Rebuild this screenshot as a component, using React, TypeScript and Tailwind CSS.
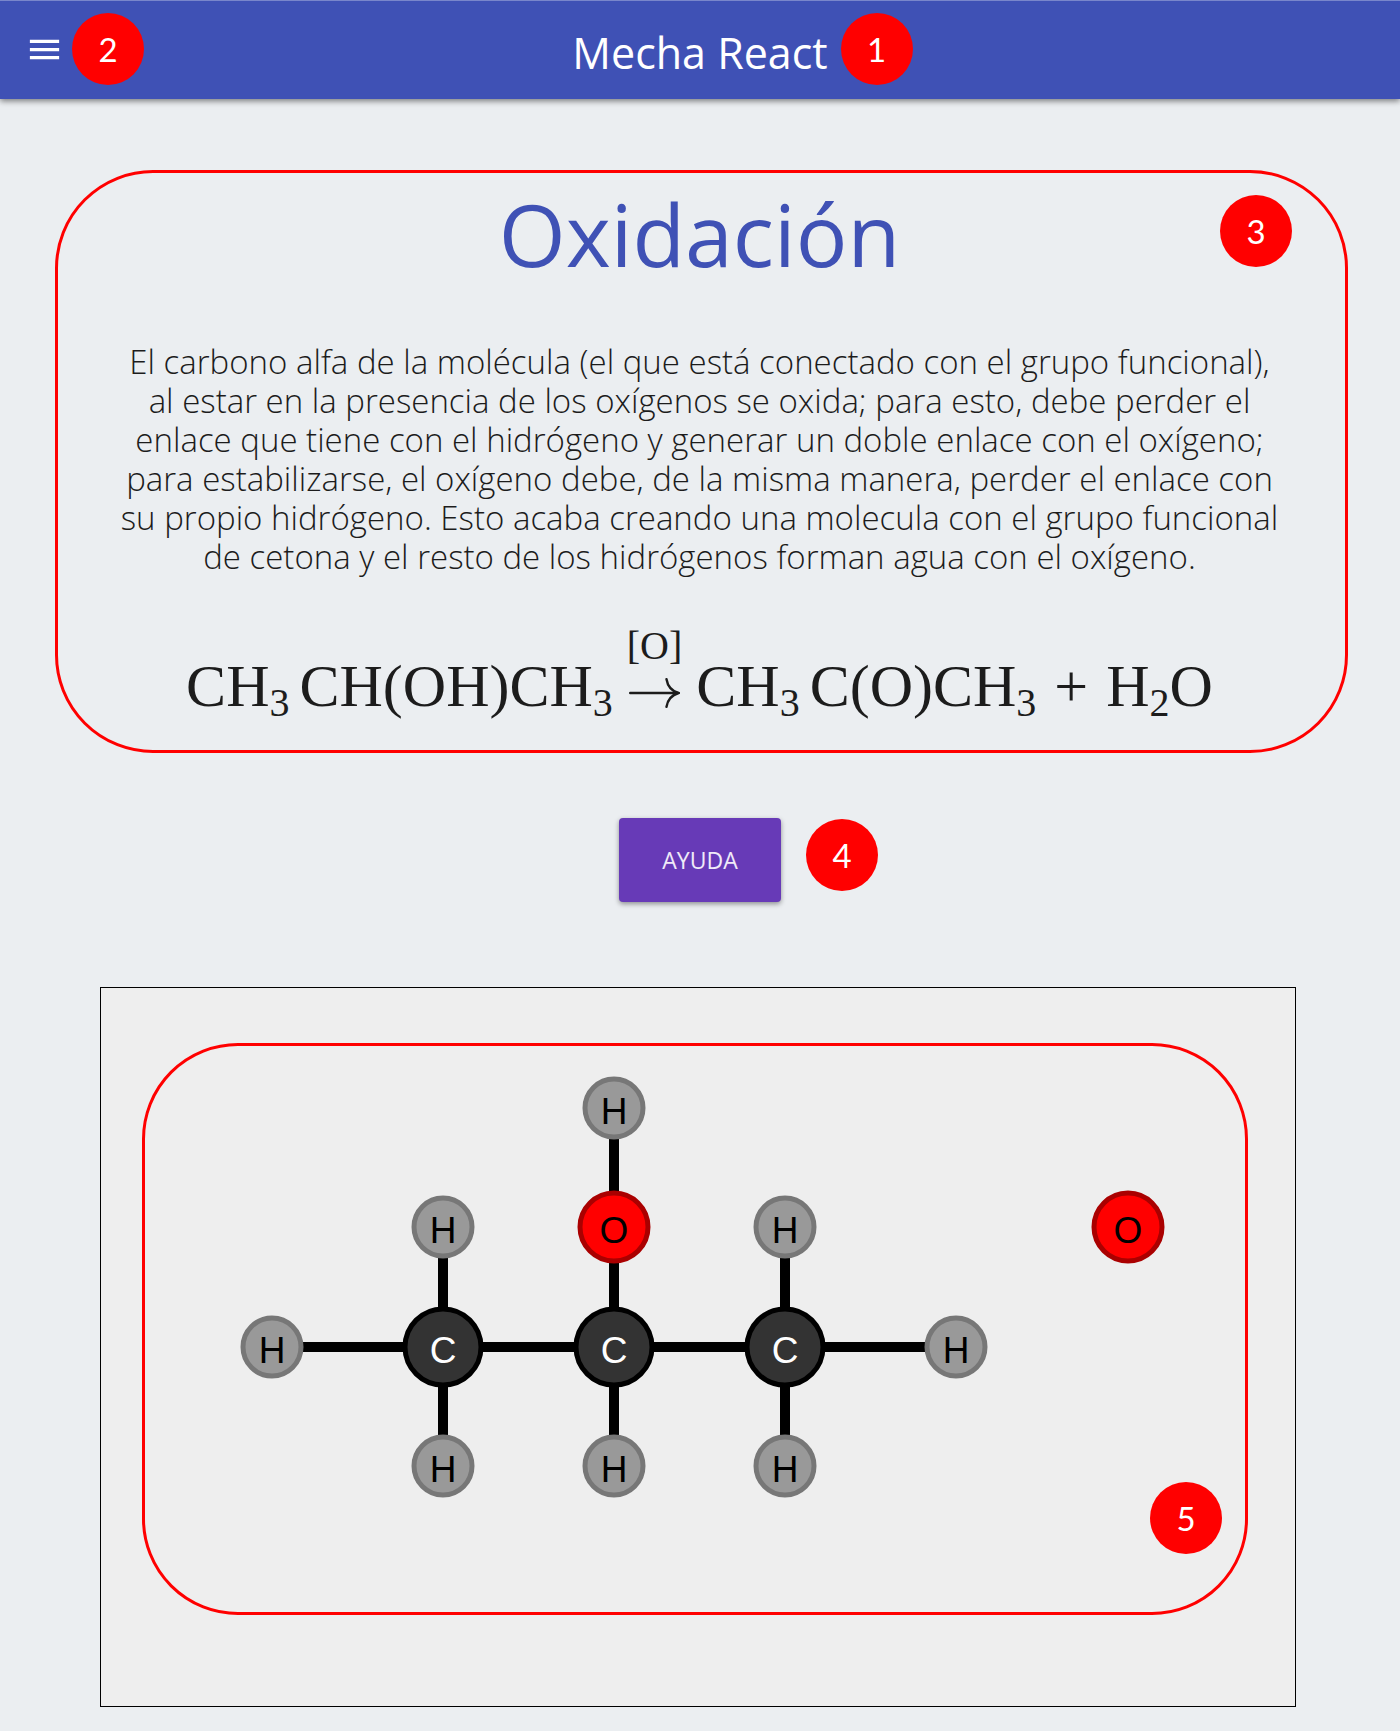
import React from "react";

type Element = "H" | "O" | "C";

const ATOM_STYLE: Record<Element, { r: number; fill: string; stroke: string; text: string }> = {
  H: { r: 29, fill: "#999999", stroke: "#777777", text: "#000000" },
  O: { r: 34, fill: "#ff0000", stroke: "#aa0000", text: "#000000" },
  C: { r: 38, fill: "#333333", stroke: "#000000", text: "#ffffff" },
};

const ATOMS: { el: Element; x: number; y: number }[] = [
  { el: "H", x: 469, y: 62 },
  { el: "H", x: 298, y: 181 },
  { el: "O", x: 469, y: 181 },
  { el: "H", x: 640, y: 181 },
  { el: "O", x: 983, y: 181 },
  { el: "H", x: 127, y: 301 },
  { el: "C", x: 298, y: 301 },
  { el: "C", x: 469, y: 301 },
  { el: "C", x: 640, y: 301 },
  { el: "H", x: 811, y: 301 },
  { el: "H", x: 298, y: 420 },
  { el: "H", x: 469, y: 420 },
  { el: "H", x: 640, y: 420 },
];

const BONDS: [number, number, number, number][] = [
  [127, 301, 811, 301],
  [298, 181, 298, 420],
  [469, 62, 469, 420],
  [640, 181, 640, 420],
];

function Badge({ n, className = "" }: { n: number; className?: string }) {
  return (
    <span
      className={`flex size-[72px] shrink-0 items-center justify-center rounded-full bg-[#ff0000] pt-0.5 font-['Lato',sans-serif] text-[33px] text-white ${className}`}
    >
      {n}
    </span>
  );
}

function Sub({ children }: { children: React.ReactNode }) {
  return <sub className="text-[40px]">{children}</sub>;
}

function Equation() {
  return (
    <div className="flex items-end justify-center whitespace-nowrap font-['Liberation_Serif',serif] text-[60px] leading-[60px] text-[#1c1c1c]">
      <span>
        CH<Sub>3</Sub>
      </span>
      <span className="ml-[10px]">
        CH(OH)CH<Sub>3</Sub>
      </span>
      <span className="mx-[14px] flex flex-col items-center gap-3 pb-2">
        <span className="text-[40px] leading-[40px]">[O]</span>
        <svg
          className="h-[30px] w-[51px]"
          viewBox="0 0 51 30"
          fill="none"
          stroke="currentColor"
          strokeWidth="2.4"
          strokeLinecap="round"
          role="img"
          aria-label="produce"
        >
          <path d="M1.2 15H49" />
          <path d="M37.5 1.2C38.6 8 43 13 49.4 15C43 17 38.6 22 37.5 28.8" />
        </svg>
      </span>
      <span>
        CH<Sub>3</Sub>
      </span>
      <span className="ml-[10px]">
        C(O)CH<Sub>3</Sub>
      </span>
      <span className="mx-[18px]">+</span>
      <span>
        H<Sub>2</Sub>O
      </span>
    </div>
  );
}

function Molecule() {
  return (
    <svg className="block w-full" viewBox="0 0 1100 566" role="img" aria-label="Molécula de isopropanol con un oxígeno libre">
      {BONDS.map(([x1, y1, x2, y2]) => (
        <line key={`${x1}-${y1}`} x1={x1} y1={y1} x2={x2} y2={y2} stroke="#000000" strokeWidth="10" />
      ))}
      {ATOMS.map(({ el, x, y }) => {
        const s = ATOM_STYLE[el];
        return (
          <g key={`${x}-${y}`}>
            <circle cx={x} cy={y} r={s.r} fill={s.fill} stroke={s.stroke} strokeWidth="5" />
            <text
              x={x}
              y={y + 16}
              textAnchor="middle"
              fill={s.text}
              className="font-['Liberation_Sans',Arial,sans-serif] text-[37px]"
            >
              {el}
            </text>
          </g>
        );
      })}
    </svg>
  );
}

export default function App() {
  return (
    <div className="min-h-screen bg-[#ebeef1] pb-6 font-['Open_Sans','Noto_Sans',sans-serif]">
      <header className="grid h-[99px] grid-cols-[1fr_auto_1fr] items-center border-t border-[#7986cb] bg-[#3f51b5] pb-0.5 text-white shadow-[0_2px_6px_rgba(0,0,0,0.5)]">
        <div className="flex items-center gap-2 pl-[25px]">
          <button type="button" aria-label="Menú">
            <svg className="size-[39px]" viewBox="0 0 24 24" fill="currentColor">
              <path d="M3 18h18v-2H3v2zm0-5h18v-2H3v2zm0-7v2h18V6H3z" />
            </svg>
          </button>
          <Badge n={2} />
        </div>
        <h1 className="pt-2 text-[43px] leading-[60px]">Mecha React</h1>
        <div className="pl-[13px]">
          <Badge n={1} />
        </div>
      </header>

      <main>
        <section className="relative mt-[71px] mr-[52px] ml-[55px] rounded-[98px] border-[3px] border-[#ff0000] pt-[11px] pr-[60px] pb-[34px] pl-14 text-center">
          <h2 className="text-[86px] leading-[100px] text-[#3f51b5]">Oxidación</h2>
          <p className="mt-[58px] text-[33px] leading-[39px] font-light text-[#1c1c1c]">
            El carbono alfa de la molécula (el que está conectado con el grupo funcional), al estar en la presencia de
            los oxígenos se oxida; para esto, debe perder el enlace que tiene con el hidrógeno y generar un doble enlace
            con el oxígeno; para estabilizarse, el oxígeno debe, de la misma manera, perder el enlace con su propio
            hidrógeno. Esto acaba creando una molecula con el grupo funcional de cetona y el resto de los hidrógenos
            forman agua con el oxígeno.
          </p>
          <div className="mt-[50px]">
            <Equation />
          </div>
          <Badge n={3} className="absolute top-[22px] right-[53px]" />
        </section>

        <div className="mt-[65px] flex justify-center">
          <div className="relative">
            <button
              type="button"
              className="h-[84px] w-[162px] rounded bg-[#673ab7] text-[23px] text-white/90 shadow-[0_2px_5px_rgba(0,0,0,0.4)]"
            >
              AYUDA
            </button>
            <Badge n={4} className="absolute top-px left-full ml-[25px]" />
          </div>
        </div>

        <section className="mt-[85px] mr-[104px] ml-[100px] border border-black bg-[#eeeeee] pt-[55px] pr-[47px] pb-[91px] pl-[41px]">
          <div className="relative rounded-[96px] border-[3px] border-[#ff0000]">
            <Molecule />
            <Badge n={5} className="absolute right-[23px] bottom-[58px]" />
          </div>
        </section>
      </main>
    </div>
  );
}
